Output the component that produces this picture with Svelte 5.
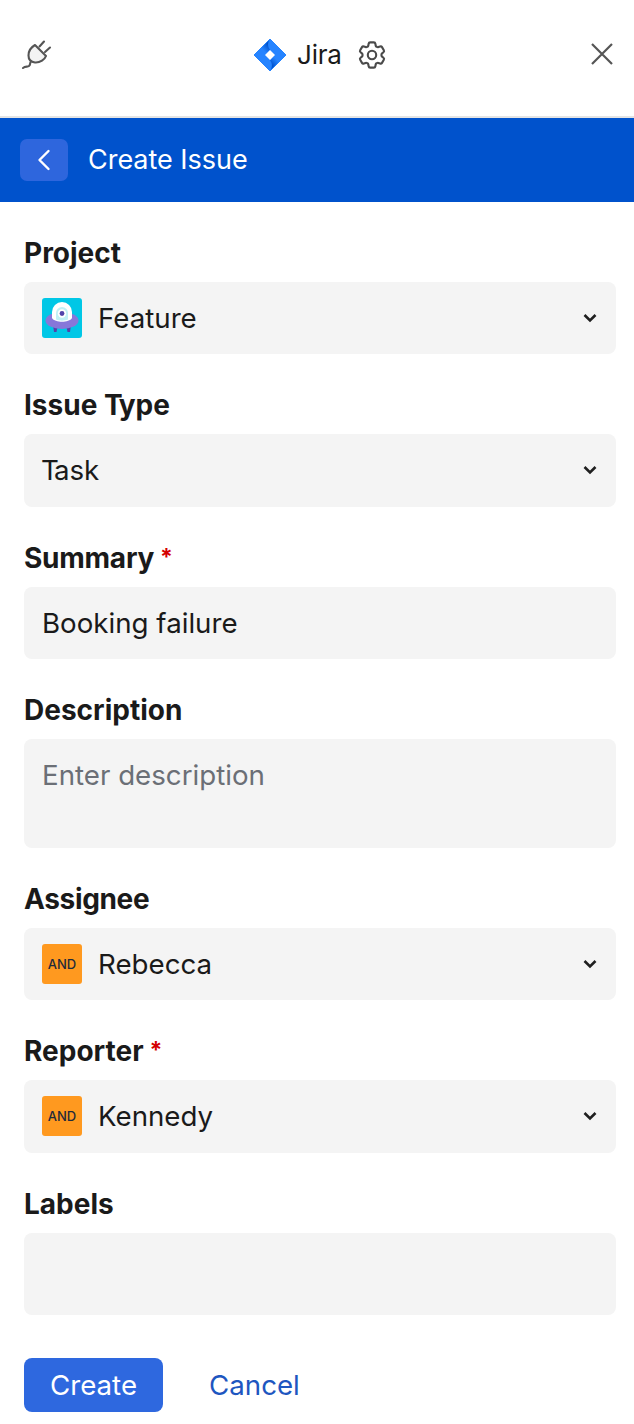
<script>
  const people = { assignee: 'Rebecca', reporter: 'Kennedy' };
</script>

{#snippet chevron()}
  <svg class="chev" viewBox="0 0 14 10" width="14" height="10" fill="none"><path d="M1.5 2 L7 7.5 L12.5 2" stroke="#1f1f1f" stroke-width="2.6"/></svg>
{/snippet}

{#snippet andIcon()}
  <span class="and">AND</span>
{/snippet}

<div class="page">
  <header class="top">
    <svg class="plug" viewBox="0 0 32 32" width="32" height="32" fill="none" stroke="#555" stroke-width="2.1" stroke-linecap="round" stroke-linejoin="round">
      <path d="M14 7 L25 18 C24 21 19 25 14 24.5 C10 24 7.5 21.5 7.5 17.5 C7.5 13 10.5 9 14 7 Z" fill="#f3f3f3"/>
      <path d="M18.5 8.5 L23 3.5 M24 14 L29 9.5"/>
      <path d="M10 23.5 C8.5 24.5 10 26.5 8 28 C6.5 29.2 4.5 28 2 30"/>
    </svg>
    <div class="brand">
      <svg class="logo" viewBox="-1 -1 34 34" width="34" height="34">
        <defs>
          <linearGradient id="j1" gradientUnits="userSpaceOnUse" x1="15" y1="5" x2="9" y2="11"><stop offset="0.1" stop-color="#0052cc"/><stop offset="1" stop-color="#2684ff"/></linearGradient>
          <linearGradient id="j2" gradientUnits="userSpaceOnUse" x1="17" y1="27" x2="23" y2="21"><stop offset="0.1" stop-color="#0052cc"/><stop offset="1" stop-color="#2684ff"/></linearGradient>
        </defs>
        <path d="M16 0 L32 16 L16 32 L0 16 Z" fill="#2684ff" stroke="#2684ff" stroke-linejoin="round"/>
        <path d="M16 10.5 C13.5 8 13.5 3 16 0.5 L5 11.5 L10.5 16 Z" fill="url(#j1)"/>
        <path d="M16 21.5 C18.5 24 18.5 29 16 31.5 L27 20.5 L21.5 16 Z" fill="url(#j2)"/>
        <path d="M16 11 L21 16 L16 21 L11 16 Z" fill="#fff"/>
      </svg>
      <span class="brand-name">Jira</span>
      <svg class="gear" viewBox="2 2 20 20" width="28" height="28" fill="none" stroke="#4a4a4a" stroke-width="1.5" stroke-linejoin="round">
        <path d="M9.594 3.94c.09-.542.56-.94 1.11-.94h2.593c.55 0 1.02.398 1.11.94l.213 1.281c.063.374.313.686.645.87.074.04.147.083.22.127.325.196.72.257 1.075.124l1.217-.456a1.125 1.125 0 0 1 1.37.49l1.296 2.247a1.125 1.125 0 0 1-.26 1.431l-1.003.827c-.293.241-.438.613-.43.992a7.723 7.723 0 0 1 0 .255c-.008.378.137.75.43.991l1.004.827c.424.35.534.955.26 1.43l-1.298 2.247a1.125 1.125 0 0 1-1.369.491l-1.217-.456c-.355-.133-.75-.072-1.076.124a6.47 6.47 0 0 1-.22.128c-.331.183-.581.495-.644.869l-.213 1.281c-.09.543-.56.94-1.11.94h-2.594c-.55 0-1.019-.398-1.11-.94l-.213-1.281c-.062-.374-.312-.686-.644-.87a6.52 6.52 0 0 1-.22-.127c-.325-.196-.72-.257-1.076-.124l-1.217.456a1.125 1.125 0 0 1-1.369-.49l-1.297-2.247a1.125 1.125 0 0 1 .26-1.431l1.004-.827c.292-.24.437-.613.43-.991a6.932 6.932 0 0 1 0-.255c.007-.38-.138-.751-.43-.992l-1.004-.827a1.125 1.125 0 0 1-.26-1.43l1.297-2.247a1.125 1.125 0 0 1 1.37-.491l1.216.456c.356.133.751.072 1.076-.124.072-.044.146-.086.22-.128.332-.183.582-.495.644-.869l.214-1.28Z"/>
        <circle cx="12" cy="12" r="3"/>
      </svg>
    </div>
    <svg class="close" viewBox="0 0 22 22" width="22" height="22" fill="none" stroke="#555" stroke-width="2.2"><path d="M1 1 L21 21 M21 1 L1 21"/></svg>
  </header>

  <div class="bar">
    <button class="back" aria-label="Back">
      <svg viewBox="0 0 14 22" width="14" height="22" fill="none" stroke="#fff" stroke-width="2.4" stroke-linecap="round" stroke-linejoin="round"><path d="M11.5 2 L2.5 11 L11.5 20"/></svg>
    </button>
    <h1>Create Issue</h1>
  </div>

  <form class="form">
    <div class="field">
      <div class="label">Project</div>
      <div class="control">
        <svg class="proj" viewBox="0 0 40 40" width="40" height="40">
          <rect width="40" height="40" rx="3" fill="#00c7e6"/>
          <path d="M11 27 L12 34 L14.5 34 L16 27 Z M29 27 L28 34 L25.5 34 L24 27 Z" fill="#5243aa"/>
          <ellipse cx="20" cy="22.5" rx="16.5" ry="8.5" fill="#8777d9"/>
          <path d="M10 20 V14 A10 10 0 0 1 30 14 V20 C27 25 13 25 10 20 Z" fill="#fff"/>
          <path d="M14 21.5 V15 A6 6 0 0 1 26 15 V21.5 C23 23 17 23 14 21.5 Z" fill="#c1f0f5"/>
          <circle cx="20" cy="15.5" r="4.2" fill="#fff"/>
          <circle cx="20" cy="15.5" r="2.4" fill="#5243aa"/>
        </svg>
        <span>Feature</span>
        {@render chevron()}
      </div>
    </div>

    <div class="field">
      <div class="label">Issue <span class="kern">T</span>ype</div>
      <div class="control"><span class="task"><span class="kern-lg">T</span>ask</span>{@render chevron()}</div>
    </div>

    <div class="field">
      <div class="label"><span class="tight">Summary</span><span class="req">*</span></div>
      <div class="control"><span>Booking failure</span></div>
    </div>

    <div class="field">
      <div class="label">Description</div>
      <div class="control area"><span class="ph">Enter description</span></div>
    </div>

    <div class="field">
      <div class="label"><span class="tighter">Assignee</span></div>
      <div class="control">{@render andIcon()}<span>{people.assignee}</span>{@render chevron()}</div>
    </div>

    <div class="field">
      <div class="label">Reporter<span class="req">*</span></div>
      <div class="control">{@render andIcon()}<span>{people.reporter}</span>{@render chevron()}</div>
    </div>

    <div class="field">
      <div class="label">Labels</div>
      <div class="control labels"></div>
    </div>

    <div class="actions">
      <button type="button" class="create">Create</button>
      <button type="button" class="cancel">Cancel</button>
    </div>
  </form>
</div>

<style>
  :global(body) { margin: 0; background: #fff; }
  .page { width: 634px; height: 1424px; overflow: hidden; font-family: Inter, "Liberation Sans", sans-serif; color: #1a1a1a; background: #fff; }
  .top { height: 108px; border-bottom: 2px solid #e4e4e4; position: relative; display: flex; align-items: center; justify-content: space-between; padding: 0 21px 8px 21px; }
  .plug { display: block; flex: none; }
  .brand { position: absolute; left: 253px; top: 38px; display: flex; align-items: center; }
  .logo { flex: none; }
  .brand-name { margin-left: 10px; font-size: 26px; line-height: 34px; letter-spacing: -0.2px; }
  .gear { margin-left: 16px; flex: none; }
  .close { flex: none; }
  .bar { height: 84px; background: #0052cc; display: flex; align-items: center; padding-left: 20px; }
  .back { width: 48px; height: 42px; border: 0; border-radius: 7px; background: #2e66dd; display: flex; align-items: center; justify-content: center; padding: 0; }
  h1 { margin: -2px 0 0 20px; font-size: 27px; font-weight: 400; color: #fff; line-height: 1; letter-spacing: -0.03px; }
  .form { padding: 34px 18px 0 24px; }
  .field { margin-bottom: 34px; }
  .label { font-size: 28px; font-weight: 700; line-height: 34px; margin-bottom: 12px; }
  .kern { letter-spacing: -4px; }
  .tight { letter-spacing: -0.25px; }
  .tighter { letter-spacing: -0.35px; }
  .req { display: inline-block; color: #d40000; margin-left: 6px; font-size: 23px; font-weight: 700; line-height: 20px; vertical-align: 3px; }
  .control { height: 72.33px; box-sizing: border-box; background: #f4f4f4; border-radius: 8px; padding: 0 18px; display: flex; align-items: center; font-size: 27.7px; position: relative; }
  .control.area { height: 109px; align-items: flex-start; padding-top: 19px; line-height: 34px; }
  .control.labels { height: 82px; }
  .task { margin-left: -1px; }
  .kern-lg { letter-spacing: -5px; }
  .ph { color: #6b6f76; }
  .proj { margin-right: 16px; flex: none; }
  .and { width: 40px; height: 40px; margin-right: 16px; flex: none; border-radius: 3px; background: #ff991f; color: #1f2a3a; font-size: 13px; font-weight: 500; display: flex; align-items: center; justify-content: center; }
  .chev { position: absolute; right: 19px; top: 50%; margin-top: -5px; }
  .actions { display: flex; align-items: center; margin-top: 43px; }
  .create { width: 139px; height: 54px; border: 0; border-radius: 8px; background: #2e68df; color: #fff; font: 400 27.7px Inter, sans-serif; padding: 0; }
  .cancel { border: 0; background: none; margin-left: 46px; padding: 0; color: #1e56c0; font: 400 27.7px Inter, sans-serif; }
</style>
